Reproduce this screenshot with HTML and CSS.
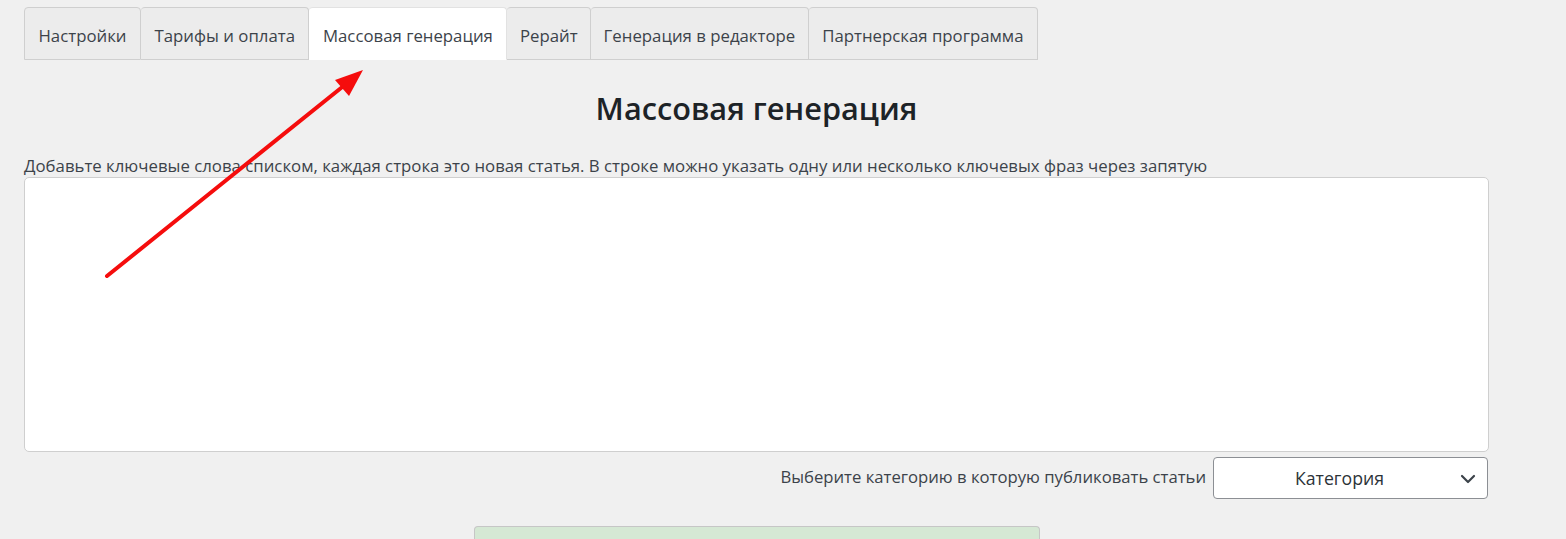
FILE: index.html
```html
<!DOCTYPE html>
<html lang="ru">
<head>
<meta charset="utf-8">
<title>Массовая генерация</title>
<link rel="stylesheet" href="styles.css">
</head>
<body>
<div class="page">
  <nav class="tabs">
    <a class="tab">Настройки</a>
    <a class="tab">Тарифы и оплата</a>
    <a class="tab active">Массовая генерация</a>
    <a class="tab narrow">Рерайт</a>
    <a class="tab narrow">Генерация в редакторе</a>
    <a class="tab">Партнерская программа</a>
  </nav>
  <main class="content">
    <h1 class="title">Массовая генерация</h1>
    <label class="hint" for="kw">Добавьте ключевые слова списком, каждая строка это новая статья. В строке можно указать одну или несколько ключевых фраз через запятую</label>
    <textarea id="kw" class="keywords"></textarea>
    <div class="category-row">
      <span class="category-label">Выберите категорию в которую публиковать статьи</span>
      <div class="select">
        <span class="select-text">Категория</span>
        <svg class="chevron" width="16" height="10" viewBox="0 0 16 10"><path d="M2 2 L8 8 L14 2" fill="none" stroke="#3c434a" stroke-width="2.2" stroke-linecap="round" stroke-linejoin="round"/></svg>
      </div>
    </div>
    <div class="submit-wrap">
      <div class="submit"></div>
    </div>
  </main>
  <svg class="arrow" width="1566" height="539" viewBox="0 0 1566 539">
    <line x1="107" y1="276" x2="346" y2="84" stroke="#f50d0d" stroke-width="4" stroke-linecap="round"/>
    <polygon points="363,70 335,80 349,96" fill="#f50d0d"/>
  </svg>
</div>
</body>
</html>
```
FILE: styles.css
```css
* { box-sizing: border-box; }
html, body { margin: 0; padding: 0; }
body {
  background: #f0f0f0;
  font-family: "Open Sans", "Noto Sans", sans-serif;
  color: #3c434a;
  width: 1566px;
  height: 539px;
  overflow: hidden;
}
.page {
  position: relative;
  padding: 7px 0 0 24px;
  width: 1566px;
  height: 539px;
  overflow: hidden;
}
.tabs {
  display: flex;
  height: 53px;
}
.tab {
  display: flex;
  align-items: center;
  padding: 3px 13.5px 0;
  background: #ececec;
  border: 1px solid #cfcfcf;
  border-left: none;
  border-radius: 4px 4px 0 0;
  font-size: 16.8px;
  color: #3c434a;
  white-space: nowrap;
}
.tab.narrow { padding: 3px 12.5px 0; }
.tab:first-child { border-left: 1px solid #cfcfcf; }
.tab.active {
  background: #fff;
  border-color: #e2e2e2;
  border-bottom-color: #fff;
}
.content {
  width: 1465px;
  display: flex;
  flex-direction: column;
}
.title {
  margin: 28px 0 0;
  text-align: center;
  font-size: 30.7px;
  font-weight: 600;
  color: #1d2327;
  line-height: 40px;
}
.hint {
  margin-top: 28px;
  font-size: 16.8px;
  line-height: 20px;
  color: #3c434a;
}
.keywords {
  display: block;
  margin-top: 1px;
  width: 1465px;
  height: 275px;
  background: #fff;
  border: 1px solid #cfcfcf;
  border-radius: 5px;
  resize: none;
  outline: none;
}
.category-row {
  display: flex;
  justify-content: flex-end;
  align-items: center;
  gap: 7px;
  margin-top: 5px;
  padding-right: 1px;
}
.category-label {
  font-size: 16.7px;
  color: #3c434a;
  padding-bottom: 4px;
}
.select {
  position: relative;
  width: 275px;
  height: 42px;
  background: #fff;
  border: 1px solid #8c8f94;
  border-radius: 4px;
  display: flex;
  align-items: center;
  justify-content: center;
  padding-right: 22px;
}
.select-text {
  font-size: 17.7px;
  color: #2c3338;
}
.chevron {
  position: absolute;
  right: 11px;
  top: 16px;
}
.submit-wrap {
  display: flex;
  justify-content: center;
  margin-top: 27px;
}
.submit {
  width: 566px;
  height: 13px;
  background: #d5e8d4;
  border: 1px solid #c6c6c6;
  border-bottom: none;
  border-radius: 4px 4px 0 0;
}
.arrow {
  position: absolute;
  left: 0;
  top: 0;
  pointer-events: none;
}
```
